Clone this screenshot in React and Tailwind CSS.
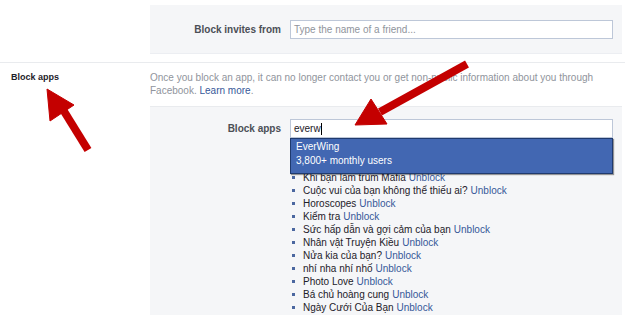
const apps = [
  "Quiz vui",
  "Ai là bạn thân",
  "Khi bạn làm trùm Mafia",
  "Cuộc vui của bạn không thể thiếu ai?",
  "Horoscopes",
  "Kiểm tra",
  "Sức hấp dẫn và gợi cảm của bạn",
  "Nhân vật Truyện Kiều",
  "Nửa kia của bạn?",
  "nhí nha nhí nhố",
  "Photo Love",
  "Bá chủ hoàng cung",
  "Ngày Cưới Của Bạn",
];

function Arrows() {
  return (
    <svg className="absolute inset-0 pointer-events-none" width="640" height="315">
      <g fill="#c40000" stroke="#c40000">
        <line x1="88" y1="150" x2="62" y2="108" strokeWidth="8" />
        <polygon points="47,89 50,121 74,105" strokeWidth="1" />
        <line x1="467" y1="64" x2="380" y2="112" strokeWidth="8" />
        <polygon points="355,125 371,99 387,124" strokeWidth="1" />
      </g>
    </svg>
  );
}

export default function App() {
  return (
    <div className="relative w-[640px] h-[315px] overflow-hidden bg-white text-[10px] leading-[13px] text-[#1d2129] font-['Liberation_Sans',Arial,sans-serif]">
      {/* block invites */}
      <div className="flex pt-[5px]">
        <div className="w-[150px] shrink-0" />
        <div className="w-[472px] h-[49px] bg-[#f5f6f8] border-b border-[#eceef2] flex items-center">
          <div className="w-[131px] text-right font-bold text-[#4b4f56]">Block invites from</div>
          <div className="ml-[9px] w-[323px] h-[19px] border border-[#bdc7d8] bg-white px-[3px] flex items-center text-[#90949c]">
            Type the name of a friend...
          </div>
        </div>
      </div>

      <div className="mt-[8px] w-[625px] border-t border-[#e9ebee]" />

      {/* block apps */}
      <div className="flex pt-[8px]">
        <div className="w-[150px] shrink-0 pl-[11px] text-[9px] font-bold text-[#1d2129]">Block apps</div>
        <div className="w-[472px]">
          <p className="text-[#90949c] w-[460px]">
            Once you block an app, it can no longer contact you or get non-public information about you through
            Facebook. <span className="text-[#365899]">Learn more</span>.
          </p>
          <div className="mt-[9px] bg-[#f5f6f8] border-t border-[#e9ebee] h-[240px] pt-[12px] flex">
            <div className="w-[131px] text-right font-bold text-[#4b4f56] pt-[3px]">Block apps</div>
            <div className="ml-[9px] w-[323px] relative">
              <div className="h-[19px] border border-[#bdc7d8] bg-white px-[3px] flex items-center">
                everw<span className="w-px h-[12px] bg-black" />
              </div>
              <div className="absolute left-0 top-[19px] w-[323px] h-[36px] bg-[#4267b2] border border-[#1f3a6e] shadow-[1px_1px_1px_rgba(0,0,0,0.4)] px-[5px] pt-[1px] text-white leading-[14px] z-10">
                <div>EverWing</div>
                <div>3,800+ monthly users</div>
              </div>
              <ul className="mt-[7px] pl-[2px]">
                {apps.map((a) => (
                  <li key={a} className="flex items-center h-[13px]">
                    <span className="w-[3px] h-[3px] bg-[#4b67a0] mr-[8px]" />
                    <span>{a}</span>
                    <span className="ml-[3px] text-[#365899]">Unblock</span>
                  </li>
                ))}
              </ul>
            </div>
          </div>
        </div>
      </div>

      <Arrows />
    </div>
  );
}
